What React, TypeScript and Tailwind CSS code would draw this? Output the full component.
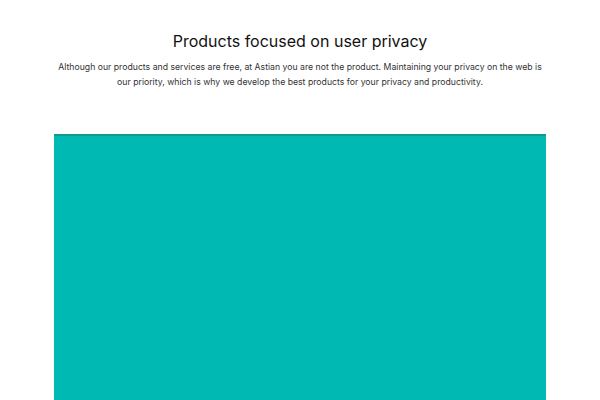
import React from 'react';

const App: React.FC = () => {
  return (
    <div className="h-screen w-full overflow-hidden bg-white flex flex-col items-center" style={{ fontFamily: "Inter, 'Noto Sans', sans-serif" }}>
      <section className="w-full flex flex-col items-center pt-[31px]">
        <h2 className="text-[16px] leading-[20px] font-normal text-[#111111]">
          Products focused on user privacy
        </h2>
        <p className="mt-[9px] w-[490px] text-center text-[8.7px] leading-[15px] text-[#333333]">
          Although our products and services are free, at Astian you are not the product. Maintaining your privacy on the web is our priority, which is why we develop the best products for your privacy and productivity.
        </p>
      </section>
      <div className="mt-[44px] w-[492px] h-[300px] shrink-0 bg-[#00b9b3] border-t-2 border-[#17988f]" />
    </div>
  );
};

export default App;
